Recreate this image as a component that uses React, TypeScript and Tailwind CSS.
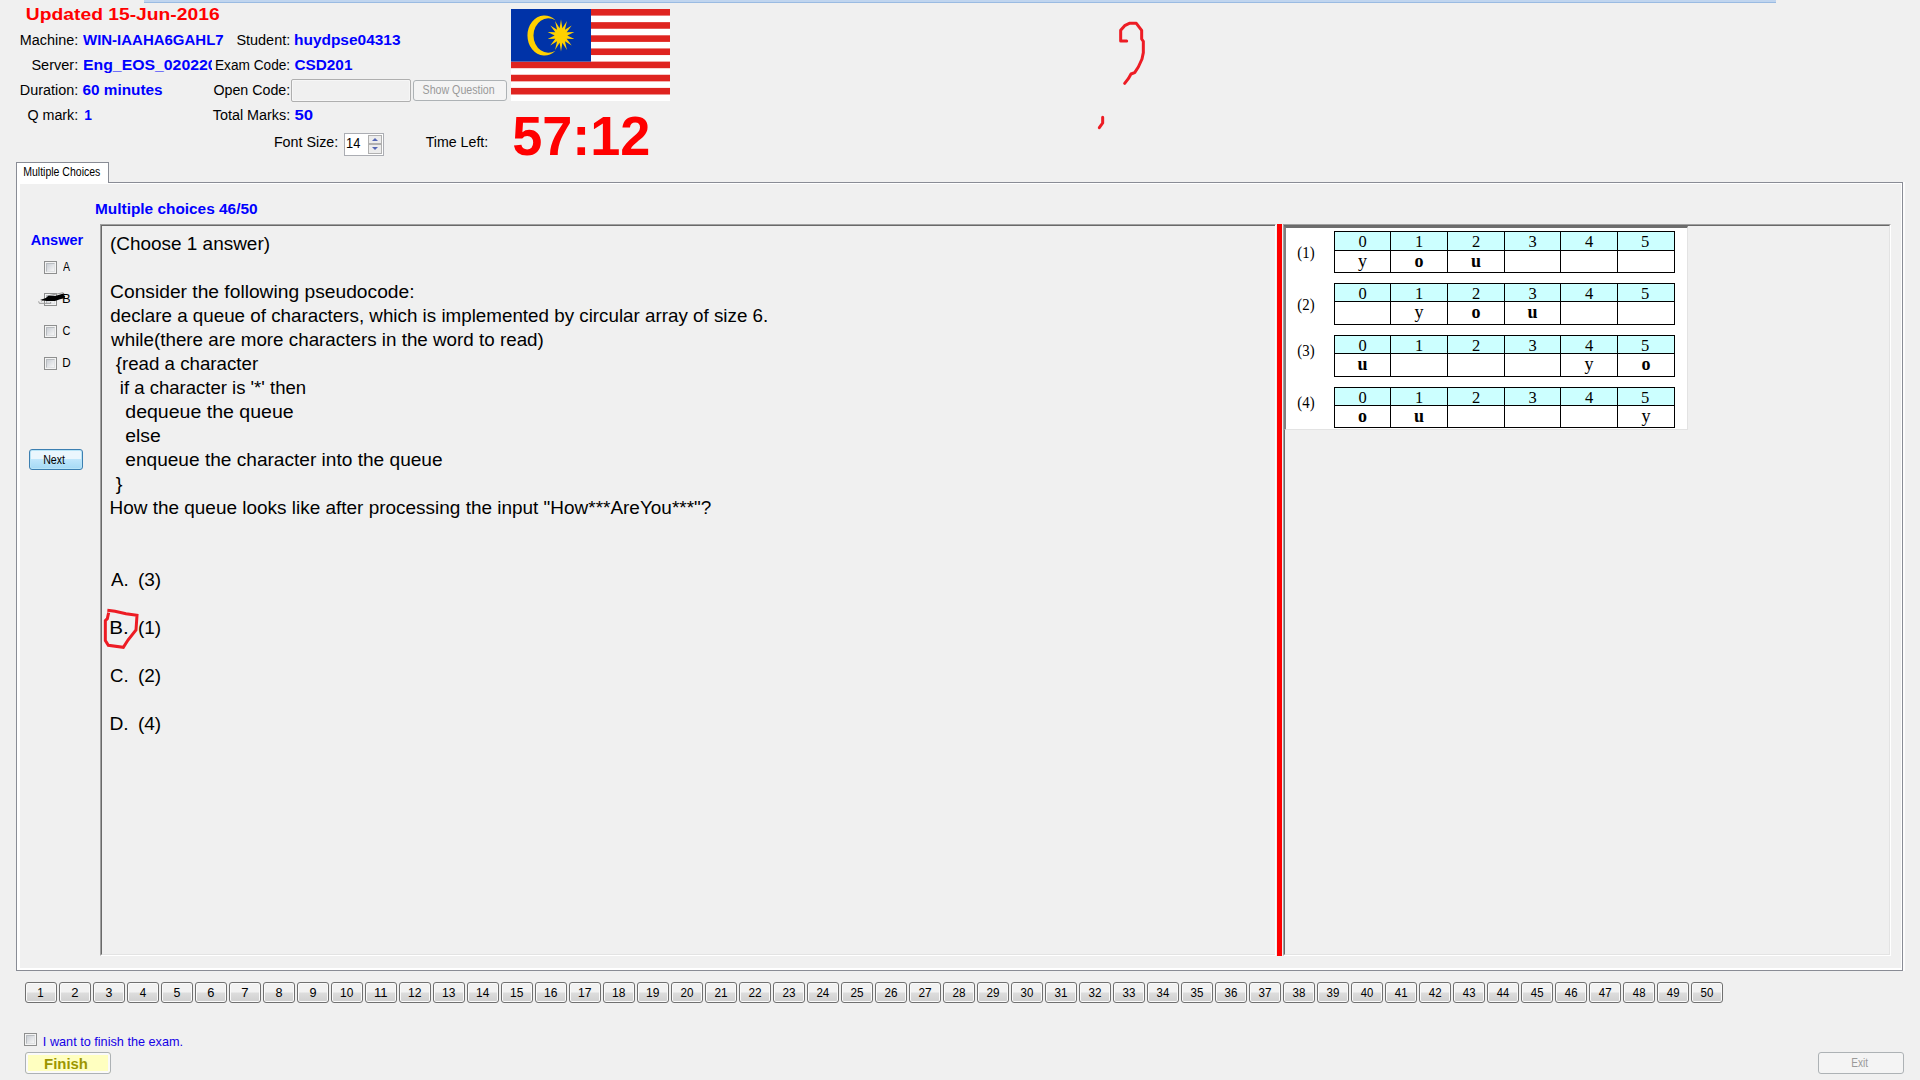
import { useLayoutEffect, useRef, type ReactNode } from "react";

/** Text whose drawn width is fitted to `w` pixels. */
function Fit({ w, children, className = "" }: { w: number; children: string; className?: string }) {
  const ref = useRef<HTMLSpanElement>(null);
  useLayoutEffect(() => {
    const el = ref.current;
    const ctx = document.createElement("canvas").getContext("2d");
    if (!el || !ctx) return;
    const cs = getComputedStyle(el);
    // Measured at ten times the size, since ink bounds come back in whole pixels.
    ctx.font = `${cs.fontWeight} ${parseFloat(cs.fontSize) * 10}px ${cs.fontFamily}`;
    const m = ctx.measureText(children);
    const left = m.actualBoundingBoxLeft / 10;
    const right = m.actualBoundingBoxRight / 10;
    const scale = w / (right + left);
    el.style.transform = `translateX(${left * scale}px) scaleX(${scale})`;
  }, [w, children]);
  return (
    <span className={"block shrink-0 whitespace-pre " + className} style={{ width: w }}>
      <span ref={ref} className="inline-block origin-left">
        {children}
      </span>
    </span>
  );
}

function Label({ w, children }: { w: number; children: string }) {
  return <Fit w={w} className="ml-auto text-[14px]">{children}</Fit>;
}

function Value({ w, children }: { w: number; children: string }) {
  return <Fit w={w} className="text-[14px] font-bold text-[#0000ff]">{children}</Fit>;
}

const info = [
  { a: "Machine:", aw: 56, b: "WIN-IAAHA6GAHL7", bw: 140, c: "Student:", cw: 52, d: "huydpse04313", dw: 105 },
  { a: "Server:", aw: 45, b: "Eng_EOS_020220", bw: 132, c: "Exam Code:", cw: 73, d: "CSD201", dw: 57 },
  { a: "Duration:", aw: 56, b: "60 minutes", bw: 79, c: "Open Code:", cw: 75, d: "", dw: 0 },
  { a: "Q mark:", aw: 49, b: "1", bw: 6.5, c: "Total Marks:", cw: 76, d: "50", dw: 17.5 },
];

const star = Array.from({ length: 28 }, (_, i) => {
  const k = i % 2 ? 0.46 : 1;
  const a = (i * Math.PI) / 14 - Math.PI / 2;
  return `${50 + 13.7 * k * Math.cos(a)},${26.5 + 16 * k * Math.sin(a)}`;
}).join(" ");

function Flag() {
  return (
    <svg width="159" height="92" viewBox="0 0 159 92" className="block">
      <rect width="159" height="92" fill="#fff" />
      {[0, 1, 2, 3, 4, 5, 6].map((i) => (
        <rect key={i} y={i * 13.15} width="159" height="6.6" fill="#df2420" />
      ))}
      <rect width="80" height="52.6" fill="#0033a8" />
      <path d="M44.5 11.3A17 20 0 1 0 44.5 41.7A15 17.2 0 1 1 44.5 11.3Z" fill="#ffd100" />
      <polygon points={star} fill="#ffd100" />
    </svg>
  );
}

function CheckBox() {
  return (
    <span className="block size-[13px] shrink-0 border border-[#8e8f8f] bg-[#f4f4f4] p-px">
      <span className="block size-full border border-[#b8bcc0] border-r-[#dfe1e3] border-b-[#dfe1e3] bg-linear-to-br from-[#cbcfd5] to-[#f6f6f6]" />
    </span>
  );
}

function Disabled({ className, children }: { className: string; children: ReactNode }) {
  return (
    <div className={"flex shrink-0 items-center rounded-[3px] border border-[#adb2b5] bg-[#f4f4f4] text-[12px] text-[#9a9a9a] " + className}>
      {children}
    </div>
  );
}

const question: [string, number, string][] = [
  ["(Choose 1 answer)", 158, "ml-0"],
  ["", 0, ""],
  ["Consider the following pseudocode:", 302, "ml-0"],
  ["declare a queue of characters, which is implemented by circular array of size 6.", 656, "ml-0"],
  ["while(there are more characters in the word to read)", 432, "ml-0"],
  ["{read a character", 142, "ml-[5px]"],
  ["if a character is '*' then", 184, "ml-[10px]"],
  ["dequeue the queue", 167, "ml-[15px]"],
  ["else", 34, "ml-[15px]"],
  ["enqueue the character into the queue", 316, "ml-[15px]"],
  ["}", 6, "ml-[5px]"],
  ['How the queue looks like after processing the input "How***AreYou***"?', 600, "ml-0"],
];

const options: [string, string][] = [
  ["A.", "(3)"],
  ["B.", "(1)"],
  ["C.", "(2)"],
  ["D.", "(4)"],
];

const tables = [
  { label: "(1)", cells: ["y", "o", "u", "", "", ""], box: "mt-[3px] h-[42px]", head: "h-[19px]", lab: "mt-[1px]" },
  { label: "(2)", cells: ["", "y", "o", "u", "", ""], box: "mt-[10px] h-[42px]", head: "h-[18px]", lab: "mt-[1px]" },
  { label: "(3)", cells: ["u", "", "", "", "y", "o"], box: "mt-[10px] h-[42px]", head: "h-[18px]", lab: "-mt-[11px]" },
  { label: "(4)", cells: ["o", "u", "", "", "", "y"], box: "mt-[10px] h-[41px]", head: "h-[18px]", lab: "-mt-[9px]" },
];

function QueueTables() {
  return (
    <div className="-ml-px h-[204px] w-[404px] border-t-2 border-r border-b border-l-2 border-t-[#6e6e6e] border-r-[#e3e3e3] border-b-[#e3e3e3] border-l-[#808080] bg-white font-['Liberation_Serif',serif] text-black">
      {tables.map((t) => (
        <div key={t.label} className={"flex items-center " + t.box}>
          <div className={"flex w-[48px] pl-[12px] text-[16px] leading-none " + t.lab}>
            <Fit w={16}>{t.label}</Fit>
          </div>
          <div className="grid h-full w-[341px] grid-cols-[56px_57px_57px_56px_57px_58px]">
            {t.cells.map((c, i) => (
              <div key={i} className={"flex flex-col border-t border-b border-l border-black " + (i === 5 ? "border-r" : "")}>
                <div className={"shrink-0 border-b border-black bg-[#ccffff] text-center text-[16.5px] leading-[20px] " + t.head + (i === 5 ? " pr-[2px]" : "")}>
                  {i}
                </div>
                <div className={"text-center text-[18px] leading-[20px] " + (c === "y" ? "" : "font-bold")}>{c}</div>
              </div>
            ))}
          </div>
        </div>
      ))}
    </div>
  );
}

export default function App() {
  return (
    <div className="relative flex h-[1080px] w-[1920px] flex-col overflow-hidden bg-[#f0f0f0] font-['Liberation_Sans',sans-serif] text-black">
      <div className="ml-[144px] h-[3px] w-[1632px] shrink-0 border-b border-[#9abbe2] bg-[#c0d5ef]" />

      <header className="flex h-[159px] shrink-0">
        <div className="w-[511px]">
          <div className="flex h-[25px] items-center pb-[2px] pl-[27px]">
            <Fit w={192} className="text-[17px] leading-[22px] font-bold text-[#ff0000]">Updated 15-Jun-2016</Fit>
          </div>
          {info.map((r) => (
            <div key={r.a} className="flex h-[25px] items-center leading-[25px]">
              <div className="flex w-[77px]"><Label w={r.aw}>{r.a}</Label></div>
              <div className={r.b === "1" ? "ml-[8px] w-[127px]" : r.b.startsWith("Eng") ? "ml-[7px] w-[128px] overflow-hidden" : "ml-[6px] w-[129px]"}>
                <Value w={r.bw}>{r.b}</Value>
              </div>
              <div className="flex w-[77px]"><Label w={r.cw}>{r.c}</Label></div>
              {r.d ? (
                <div className="ml-[6px]"><Value w={r.dw}>{r.d}</Value></div>
              ) : (
                <div className="ml-[2px] flex gap-[2px]">
                  <div className="h-[23px] w-[120px] rounded-[2px] border border-[#afafaf] shadow-[inset_0_0_0_1px_#f6f6f6]" />
                  <Disabled className="mt-px h-[21px] w-[94px] pl-[9px]">
                    <Fit w={71}>Show Question</Fit>
                  </Disabled>
                </div>
              )}
            </div>
          ))}
          <div className="flex h-[29px] items-center pl-[275px] leading-[20px]">
            <Fit w={62} className="-mt-[2px] text-[14px]">Font Size:</Fit>
            <div className="mt-[4px] ml-[7px] flex h-[23px] w-[40px] items-center justify-between border border-[#abadb3] bg-white pr-px pl-[2px]">
              <Fit w={13} className="-mt-[4px] text-[14px]">14</Fit>
              <div className="-mt-[1px] flex flex-col">
                <div className="flex h-[9px] w-[14px] items-center justify-center border border-[#b0b0b0] bg-[#ececec]">
                  <svg width="6" height="3" viewBox="0 0 6 3"><path d="M3 0L6 3H0Z" fill="#5567b5" /></svg>
                </div>
                <div className="flex h-[10px] w-[14px] items-center justify-center border border-[#b0b0b0] bg-[#ececec]">
                  <svg width="6" height="3" viewBox="0 0 6 3"><path d="M0 0H6L3 3Z" fill="#5567b5" /></svg>
                </div>
              </div>
            </div>
            <Fit w={61} className="-mt-[2px] ml-[42px] text-[14px]">Time Left:</Fit>
          </div>
        </div>
        <div className="pt-[6px]">
          <Flag />
          <div className="mt-[10px] ml-[2px]">
            <Fit w={136} className="text-[56px] leading-[50px] font-bold text-[#ff0000]">57:12</Fit>
          </div>
        </div>
      </header>

      <div className="z-10 ml-[16px] flex h-[21px] w-[93px] shrink-0 items-center border border-b-0 border-[#898c95] bg-white pb-[2px] pl-[7px] text-[12px]">
        <Fit w={76}>Multiple Choices</Fit>
      </div>

      <main className="-mt-px ml-[16px] flex h-[789px] w-[1887px] shrink-0 border border-[#898c95] bg-white pt-px pr-px pb-[2px] pl-[3px] shadow-[2px_0_0_#fcfcfc]">
        <div className="flex min-w-0 flex-1 bg-[#f0f0f0]">
          <aside className="w-[80px] shrink-0 pt-[46px]">
            <Fit w={52} className="ml-[11px] text-[14px] leading-[20px] font-bold text-[#0000ff]">Answer</Fit>
            <div className="mt-[1px] flex flex-col">
              {["A", "B", "C", "D"].map((c) => (
                <div key={c} className="relative flex h-[32px] items-center gap-[6px] pl-[24px] text-[12px]">
                  <CheckBox />
                  <Fit w={7} className="-mt-px">{c}</Fit>
                  {c === "B" && (
                    <svg className="absolute top-[8px] left-[17px]" width="32" height="16" viewBox="111 427 96 48">
                      <path d="M116 458L118 464H152V460M124 458L150 440L190 432" fill="none" stroke="#999" strokeWidth="3" />
                      <path d="M120 454L138 448L145 441L165 442L193 434L190 439L196 444L193 449L180 452L165 457L140 457Z" fill="#000" />
                    </svg>
                  )}
                </div>
              ))}
            </div>
            <div className="mt-[70px] ml-[9px] flex h-[21px] w-[54px] items-center rounded-[3px] border border-[#3c7fb1] bg-linear-to-b from-[#eaf6fd] from-45% via-[#bfe6fb] via-50% to-[#a4d9f5] pl-[14px] text-[12px] shadow-[inset_0_0_0_1px_#b8e4f7]">
              <Fit w={21}>Next</Fit>
            </div>
          </aside>

          <section className="flex min-w-0 flex-1 flex-col">
            <div className="h-[40px] shrink-0 pt-[15px]">
              <Fit w={161} className="-ml-[4px] text-[14px] leading-[20px] font-bold text-[#0000ff]">Multiple choices 46/50</Fit>
            </div>
            <div className="flex h-[732px] w-[1791px]">
              <div className="h-full w-[1176px] border border-t-[#a0a0a0] border-r-white border-b-white border-l-[#a0a0a0]">
                <div className="h-full border-t border-b border-l border-t-[#696969] border-b-[#e3e3e3] border-l-[#696969] pt-[6px] pl-[9px] text-[18.67px] leading-[24px]">
                  {question.map(([text, w, pad], i) => (
                    <div key={i} className="h-[24px]">
                      {text && <Fit w={w} className={pad}>{text}</Fit>}
                    </div>
                  ))}
                  <div className="mt-[48px] flex flex-col gap-[24px]">
                    {options.map(([k, v]) => (
                      <div key={k} className="relative flex h-[24px]">
                        <div className="w-[28px]"><Fit w={16}>{k}</Fit></div>
                        <Fit w={21}>{v}</Fit>
                        {k === "B." && (
                          <svg className="absolute -top-[8px] -left-[8px]" width="36" height="42" viewBox="309 534 108 126" fill="none" stroke="#ed1c24" strokeWidth="9">
                            <path d="M322 541L345 544L378 551L411 556L408 600L384 630L370 652L325 646L316 632V572L322 566L326 548" />
                          </svg>
                        )}
                      </div>
                    ))}
                  </div>
                </div>
              </div>
              <div className="ml-px h-full w-[5px] bg-[#ff0000]" />
              <div className="ml-px h-full flex-1 border border-t-[#a0a0a0] border-r-white border-b-white border-l-[#a0a0a0]">
                <div className="h-full border border-t-[#696969] border-r-[#e3e3e3] border-b-[#e3e3e3] border-l-[#696969]">
                  <QueueTables />
                </div>
              </div>
            </div>
          </section>
        </div>
      </main>

      <nav className="mt-[11px] ml-[25px] flex shrink-0 gap-[2px]">
        {Array.from({ length: 50 }, (_, i) => (
          <div key={i} className="flex h-[21px] w-[32px] items-center rounded-[3px] border border-[#707070] bg-linear-to-b from-[#f2f2f2] from-48% via-[#dddddd] via-52% to-[#cfcfcf] text-[12px] leading-[18px] shadow-[inset_0_0_0_1px_#fafafa]">
            <Fit w={i === 0 ? 5 : i < 9 ? 6 : 12} className={i < 9 ? "ml-[11.5px]" : "ml-[8.5px]"}>{String(i + 1)}</Fit>
          </div>
        ))}
      </nav>

      <footer className="mt-[28px] flex shrink-0 justify-between pr-[16px] pl-[24px]">
        <div>
          <div className="flex h-[21px] items-start gap-[7px] pt-[2px]">
            <CheckBox />
            <Fit w={138} className="text-[13px] leading-[17px] text-[#1400e6]">I want to finish the exam.</Fit>
          </div>
          <div className="ml-px flex h-[22px] w-[86px] items-center rounded-[3px] border border-[#adb2b5] bg-[#ffffc0] pt-[2px] pl-[19px] text-[14px] font-bold text-[#9c9600] shadow-[inset_0_0_0_2px_#fafafa]">
            <Fit w={42}>Finish</Fit>
          </div>
        </div>
        <Disabled className="mt-[21px] h-[22px] w-[86px] pl-[33px]">
          <Fit w={16}>Exit</Fit>
        </Disabled>
      </footer>

      <svg className="absolute top-[15px] left-[1090px]" width="70" height="120" viewBox="30 45 210 360" fill="none" stroke="#ed1c24" strokeWidth="9" strokeLinecap="round" strokeLinejoin="round">
        <path d="M140 123H122V91L134 77L148 70H169L185 91V117L190 124V158L186 177L175 201L164 218L153 222L145 236L134 250" />
        <path d="M68 352V369L58 383" />
      </svg>
    </div>
  );
}
